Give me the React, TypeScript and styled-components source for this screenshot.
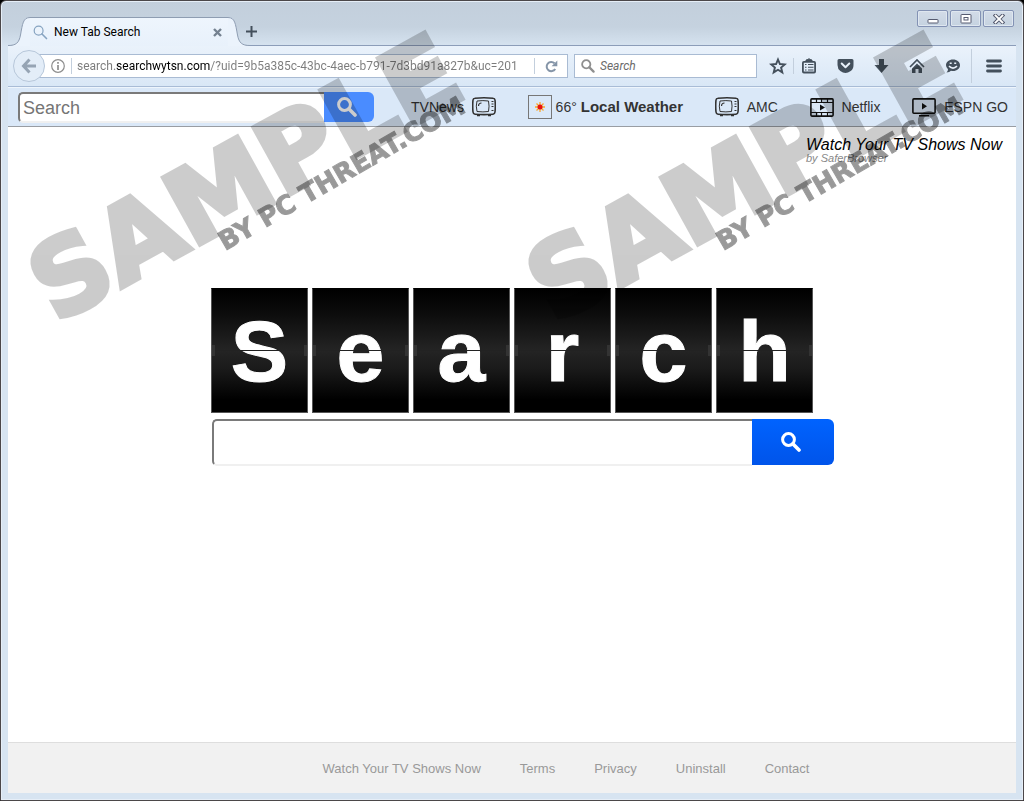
import React from 'react';
import styled, { createGlobalStyle } from 'styled-components';

const GlobalStyle = createGlobalStyle`
  * { box-sizing: border-box; }
  body { margin: 0; background: #000; font-family: "Liberation Sans", Arial, sans-serif; }
  button { font: inherit; cursor: pointer; }
  a { color: inherit; text-decoration: none; }
  svg { display: block; flex: none; }
`;

const uiFont = 'Roboto, "Noto Sans", sans-serif';

const Frame = styled.div`
  position: relative;
  overflow: hidden;
  display: flex;
  flex-direction: column;
  min-height: 100vh;
  padding: 0 7px 7px;
  border: 1px solid #4b4749;
  border-radius: 6px 6px 0 0;
  background: linear-gradient(#c3cfdc 0, #c5d2df 26px, #d7e4f1 46px);
  box-shadow: inset 0 0 0 1px #e6eef7;
`;

const TitleBar = styled.header`
  display: flex;
  justify-content: space-between;
  height: 44px;
`;

const TabStrip = styled.div`
  display: flex;
  align-items: flex-end;
  margin-bottom: -1px;
  z-index: 1;
`;

const TabBody = styled.div`
  display: flex;
  align-items: center;
  width: 198px;
  height: 29px;
  padding: 0 6px 0 3px;
  border-top: 1px solid #8e9db2;
  background: linear-gradient(#eef5fd, #e8f1fb);
  font: 12px/16px ${uiFont};
  color: #000;
`;

const TabTitle = styled.span`
  flex: 1;
  margin-left: 6px;
  white-space: nowrap;
`;

const PlainButton = styled.button`
  display: flex;
  align-items: center;
  justify-content: center;
  padding: 0;
  border: 0;
  background: none;
`;

const NewTabButton = styled(PlainButton)`
  width: 12px;
  height: 29px;
  margin-left: -5px;
`;

const WindowControls = styled.div`
  display: flex;
  gap: 2px;
  padding: 9px 2px 0 0;
`;

const WindowButton = styled(PlainButton)`
  width: 31px;
  height: 17px;
  border: 1px solid #8392b4;
  border-radius: 2px;
  background: linear-gradient(#d3dce8, #c5d2e0);
  box-shadow: inset 0 0 0 1px #dfe7f0;
`;

const NavBar = styled.div`
  display: flex;
  align-items: center;
  height: 42px;
  padding: 0 1px 0 5px;
  border-top: 1px solid #8c9db9;
  border-bottom: 1px solid #a9bcd6;
  background: linear-gradient(#eaf2fb, #d9e7f6);
`;

const BackButton = styled(PlainButton)`
  width: 32px;
  height: 32px;
  border: 1px solid #b7c7da;
  border-radius: 50%;
  background: #e3edf8;
  z-index: 1;
`;

const Field = styled.div`
  display: flex;
  align-items: center;
  height: 24px;
  border: 1px solid #a9bbd3;
  background: #fff;
`;

const UrlField = styled(Field)`
  flex: 1;
  min-width: 0;
  margin-left: -6px;
  padding-left: 11px;
`;

const SearchField = styled(Field)`
  width: 183px;
  margin: 0 11px 0 6px;
  padding-left: 6px;
`;

const Separator = styled.span<{ $tall?: boolean }>`
  width: 1px;
  height: ${(p) => (p.$tall ? 34 : 16)}px;
  background: #c3cfdd;
`;

const InfoSeparator = styled(Separator)`
  margin-left: 6px;
`;

const StarSeparator = styled(Separator)`
  margin: 0 -3px 0 5px;
`;

const UrlInput = styled.input`
  flex: 1;
  min-width: 0;
  margin-left: 5px;
  padding: 0;
  border: 0;
  outline: 0;
  font: 12px/18px ${uiFont};
  color: #000;
  background: linear-gradient(90deg, #7b7b7b 38px, #000 38px, #000 133px, #7b7b7b 133px);
  -webkit-background-clip: text;
  background-clip: text;
  -webkit-text-fill-color: transparent;
`;

const NavSearchInput = styled.input`
  flex: 1;
  min-width: 0;
  margin-left: 5px;
  padding: 0;
  border: 0;
  outline: 0;
  background: none;
  font: italic 12px/18px ${uiFont};
  &::placeholder { color: #6b6b6b; opacity: 1; }
`;

const ReloadButton = styled(PlainButton)`
  width: 32px;
  height: 22px;
`;

const NavIconButton = styled(PlainButton)<{ $w?: number }>`
  width: ${(p) => p.$w ?? 36}px;
  height: 32px;
`;

const Toolbar = styled.div`
  display: flex;
  align-items: center;
  height: 40px;
  padding: 0 8px 0 10px;
  border-top: 1px solid #eef5fc;
  border-bottom: 1px solid #999da3;
  background: #dae8f8;
`;

const SearchForm = styled.form`
  display: flex;
  flex: none;
`;

const InsetInput = styled.input<{ $large?: boolean }>`
  width: ${(p) => (p.$large ? 540 : 306)}px;
  height: ${(p) => (p.$large ? 47 : 31)}px;
  padding: 3px 3px 0;
  border: 2px solid;
  border-color: #7a7a7a #f0f0f0 #f0f0f0 #7a7a7a;
  border-right-width: 0;
  border-radius: 5px 0 0 5px;
  outline: 0;
  background: #fff;
  font: 18px/24px "Liberation Sans", Arial, sans-serif;
  &::placeholder { color: #757575; opacity: 1; }
`;

const BlueButton = styled(PlainButton)<{ $large?: boolean }>`
  width: ${(p) => (p.$large ? 82 : 50)}px;
  height: ${(p) => (p.$large ? 46 : 30)}px;
  padding-right: 4px;
  border-radius: 0 6px 6px 0;
  background: ${(p) => (p.$large ? 'linear-gradient(#0063ff, #0054ea)' : '#4a8cff')};
`;

const Shortcuts = styled.nav`
  display: flex;
  flex: 1;
  justify-content: space-between;
  margin-left: 37px;
  font-size: 14px;
  line-height: 24px;
  color: #333;
`;

const Shortcut = styled.a<{ $gap?: number }>`
  display: flex;
  align-items: center;
  gap: ${(p) => p.$gap ?? 8}px;
  white-space: nowrap;
`;

const WeatherLabel = styled.b`
  font-size: 15px;
`;

const WeatherIcon = styled.span`
  display: flex;
  align-items: center;
  justify-content: center;
  width: 24px;
  height: 24px;
  border: 1px solid #777;
`;

const Main = styled.main`
  display: flex;
  flex: 1;
  flex-direction: column;
  background: #fff;
`;

const Brand = styled.div`
  align-self: flex-end;
  width: 210px;
  height: 161px;
  padding-top: 9px;
  font-style: italic;
`;

const BrandName = styled.p`
  margin: 0;
  font-size: 16px;
  line-height: 17px;
  color: #000;
`;

const BrandBy = styled.p`
  margin: 0;
  font-size: 11px;
  line-height: 10px;
  color: #888;
`;

const Hero = styled.section`
  width: 602px;
  margin: 0 auto;
`;

const Tiles = styled.h1`
  display: grid;
  grid-template-columns: repeat(6, 97px);
  gap: 4px;
  margin: 0 0 6px;
`;

const Tile = styled.span`
  position: relative;
  height: 125px;
  border: 1px solid #555;
  border-top-color: #000;
  background: linear-gradient(#000, #0c0c0c 20%, #242424 50%, #1a1a1a 65%, #000 90%);
  text-align: center;
  font-size: 86px;
  font-weight: 700;
  line-height: 124px;
  color: #fff;
  -webkit-text-stroke: 1px #fff;

  &::before {
    content: '';
    position: absolute;
    left: 0;
    right: 0;
    top: 61px;
    height: 1px;
    background: #222;
  }
  &::after {
    content: '';
    position: absolute;
    left: 0;
    right: 0;
    top: 56px;
    height: 11px;
    border: solid #333;
    border-width: 0 3px;
  }
`;

const HeroForm = styled(SearchForm)`
  width: 622px;
  margin-left: 1px;
`;

const Footer = styled.footer`
  display: flex;
  justify-content: center;
  align-items: center;
  gap: 39px;
  height: 51px;
  padding: 2px 0 0 108px;
  border-top: 1px solid #dedede;
  background: #f1f1f1;
  font-size: 13px;
  line-height: 18px;
  color: #999;
`;

const Stamp = styled.div<{ $x: number }>`
  position: absolute;
  left: ${(p) => p.$x}px;
  top: 0;
  pointer-events: none;
  z-index: 2;
  font-family: "DejaVu Sans", sans-serif;
  font-weight: 700;
  white-space: nowrap;
  color: #000;
`;

const StampWord = styled.span`
  position: absolute;
  left: 55px;
  top: 235px;
  font-size: 104px;
  line-height: 104px;
  opacity: 0.2;
  -webkit-text-stroke: 5px #000;
  transform: rotate(-29deg);
  transform-origin: 0 85%;
`;

const StampBy = styled.span`
  position: absolute;
  left: 224px;
  top: 228px;
  font-size: 26px;
  line-height: 26px;
  opacity: 0.4;
  -webkit-text-stroke: 1px #000;
  transform: rotate(-30deg);
  transform-origin: 0 85%;
`;

const Magnifier = ({ size, color, thick }: { size: number; color: string; thick: number }) => (
  <svg width={size} height={size} viewBox="0 0 20 20" fill="none" stroke={color} strokeWidth={thick}>
    <circle cx="7.5" cy="7.5" r="5.9" />
    <path d="M12 12l6 6" strokeWidth={thick + 0.6} strokeLinecap="round" />
  </svg>
);

const TvIcon = () => (
  <svg width="24" height="20" viewBox="0 0 24 20" fill="none" stroke="#333">
    <path d="M3 1.2Q12 .4 21 1.2 22.8 1.3 23 3 23.6 9 23 15 22.8 17 21 17.2 12 18 3 17.2 1.2 17 1 15 .4 9 1 3 1.2 1.3 3 1.2Z" strokeWidth="1.6" />
    <path d="M5 4Q11 3.2 16.5 4 17.6 9 16.5 14.5 11 15.3 5 14.5 3.6 9 5 4Z" strokeWidth="1" />
    <path d="M6.5 9Q6.5 6 9.5 6M19.5 4.5h2M19.5 7h2M19.5 9.5h2M19.5 13.5h2M5 18.6h3M16 18.6h3" strokeWidth="1.1" />
  </svg>
);

const FilmIcon = () => (
  <svg width="24" height="19" viewBox="0 0 24 19" fill="none" stroke="#111">
    <rect x=".9" y=".9" width="22.2" height="17.2" rx="1" strokeWidth="1.6" />
    <path d="M1 4.500h22M1 14.500h22" strokeWidth="1" />
    <path d="M6.500 1v3.300M11.500 1v3.300M17.500 1v3.300M6.500 14.700V18M11.500 14.700V18M17.500 14.700V18" strokeWidth="1.2" />
    <path d="M10 6.500l5 3-5 3z" fill="#111" stroke="none" />
  </svg>
);

const ScreenIcon = () => (
  <svg width="24" height="19" viewBox="0 0 24 19" fill="none" stroke="#111">
    <rect x=".9" y=".9" width="22.2" height="14.4" rx="1" strokeWidth="1.6" />
    <path d="M10 5l5 3.200-5 3.200z" fill="#111" stroke="none" />
    <path d="M7 17.700h10" strokeWidth="1.5" />
  </svg>
);

const StarIcon = () => (
  <svg width="18" height="18" viewBox="0 0 18 18" fill="none" stroke="#44505c" strokeWidth="1.9" strokeLinejoin="miter">
    <path d="M9 2.500l1.900 4.500 4.900.4-3.700 3.200 1.200 4.800L9 12.800l-4.300 2.600 1.200-4.800-3.700-3.200L7.100 7z" />
  </svg>
);

const ClipboardIcon = () => (
  <svg width="16" height="16" viewBox="0 0 16 16" fill="none" stroke="#44505c">
    <rect x="1.9" y="3.9" width="12.2" height="10.6" rx="1" strokeWidth="1.8" />
    <path d="M5 3V2l2-.4L8 .5l1 1.100L11 2v1z" fill="#44505c" />
    <path d="M4 6.500h1.500M7 6.500h5.500M4 9.200h1.500M7 9.200h5.500M4 12h1.500M7 12h5.500" strokeWidth="1.1" />
  </svg>
);

const PocketIcon = () => (
  <svg width="17" height="16" viewBox="0 0 17 16" fill="none">
    <path d="M2 1h13q1.500 0 1.500 1.500V7q0 4-2.800 6T8.500 15Q6 15 3.300 13T.5 7V2.500Q.5 1 2 1z" fill="#44505c" />
    <path d="M4.700 5.500l3.800 3.700 3.800-3.700" stroke="#e9f1fa" strokeWidth="2" strokeLinecap="round" strokeLinejoin="round" />
  </svg>
);

const DownloadIcon = () => (
  <svg width="15" height="16" viewBox="0 0 15 16">
    <path d="M5 1h5v6h4.500L7.500 15 .5 7H5z" fill="#44505c" />
  </svg>
);

const HomeIcon = () => (
  <svg width="16" height="16" viewBox="0 0 16 16" fill="none">
    <path d="M1 9l7-7 7 7" stroke="#44505c" strokeWidth="1.600" />
    <path d="M3 10.500l5-5 5 5V15H9.500v-4h-3v4H3z" fill="#44505c" />
  </svg>
);

const ChatIcon = () => (
  <svg width="16" height="16" viewBox="0 0 16 16" fill="none">
    <path d="M8 1.500c4 0 7 2.500 7 5.700s-3 5.800-7 5.800q-1 0-2-.3Q4.500 14.500 1.500 14.500 3 13 3 11.300 1 9.600 1 7.200C1 4 4 1.500 8 1.500z" fill="#44505c" />
    <path d="M4 8.200q4 3.800 8 0M4.700 5.300h2M9.200 5.300h2" stroke="#e9f1fa" strokeWidth="1.600" />
  </svg>
);

const MenuIcon = () => (
  <svg width="16" height="14" viewBox="0 0 16 14" stroke="#44505c" strokeWidth="2.800" strokeLinecap="round">
    <path d="M1.500 2h13M1.500 7h13M1.500 12h13" />
  </svg>
);

const SunIcon = () => (
  <svg width="12" height="12" viewBox="0 0 12 12">
    <path d="M6 1v10M1 6h10M2.500 2.500l7 7M9.500 2.500l-7 7" stroke="#f9a72b" strokeWidth="1.300" />
    <circle cx="6" cy="6" r="2.500" fill="#e81010" />
  </svg>
);

const leftEdge = {
  fill: 'M0 29.500C8 29.500 11 27 12.500 19 14.500 8 15 1.500 22 1V30H0z',
  line: 'M0 29.500C8 29.500 11 27 12.500 19 14.500 8 15 1.500 22 1.500',
};
const rightEdge = {
  fill: 'M22 29.500C14 29.500 11 27 9.500 19 7.500 8 7 1.500 0 1V30H22z',
  line: 'M22 29.500C14 29.500 11 27 9.500 19 7.500 8 7 1.500 0 1.500',
};

const TabEdge = ({ shape }: { shape: { fill: string; line: string } }) => (
  <svg width="22" height="30" viewBox="0 0 22 30">
    <path d={shape.fill} fill="#ebf3fc" />
    <path d={shape.line} fill="none" stroke="#8e9db2" />
  </svg>
);

const footerLinks = ['Watch Your TV Shows Now', 'Terms', 'Privacy', 'Uninstall', 'Contact'];

const stop = (e: React.FormEvent) => e.preventDefault();

export default function App() {
  return (
    <>
      <GlobalStyle />
      <Frame>
        <TitleBar>
          <TabStrip>
            <TabEdge shape={leftEdge} />
            <TabBody>
              <Magnifier size={15} color="#86a3c0" thick={1.6} />
              <TabTitle>New Tab Search</TabTitle>
              <PlainButton aria-label="Close tab">
                <svg width="9" height="9" viewBox="0 0 9 9" stroke="#748190" strokeWidth="2.4">
                  <path d="M1 1l7 7M8 1L1 8" />
                </svg>
              </PlainButton>
            </TabBody>
            <TabEdge shape={rightEdge} />
            <NewTabButton aria-label="New tab">
              <svg width="11" height="11" viewBox="0 0 11 11" stroke="#44505c" strokeWidth="2">
                <path d="M5.500 0v11M0 5.500h11" />
              </svg>
            </NewTabButton>
          </TabStrip>
          <WindowControls>
            <WindowButton aria-label="Minimize">
              <svg width="12" height="10" viewBox="0 0 12 10">
                <rect x="1" y="5.500" width="10" height="3.500" rx=".5" fill="#fff" stroke="#565b70" />
              </svg>
            </WindowButton>
            <WindowButton aria-label="Maximize">
              <svg width="12" height="10" viewBox="0 0 12 10" fill="#fff" stroke="#565b70">
                <rect x="1" y=".5" width="10" height="8.500" rx=".5" />
                <rect x="4" y="3.500" width="4" height="2.500" />
              </svg>
            </WindowButton>
            <WindowButton aria-label="Close">
              <svg width="12" height="10" viewBox="0 0 12 10" fill="none" strokeLinecap="square">
                <path d="M2.500 1.500l7 7M9.500 1.500l-7 7" stroke="#565b70" strokeWidth="3.800" />
                <path d="M2.500 1.500l7 7M9.500 1.500l-7 7" stroke="#fff" strokeWidth="1.800" />
              </svg>
            </WindowButton>
          </WindowControls>
        </TitleBar>

        <NavBar>
          <BackButton aria-label="Back">
            <svg width="16" height="16" viewBox="0 0 16 16" fill="none" stroke="#96a4b4" strokeWidth="3">
              <path d="M8.500 1.500L2.500 8l6 6.500M3 8h12" />
            </svg>
          </BackButton>
          <UrlField>
            <svg width="14" height="14" viewBox="0 0 14 14" fill="none" stroke="#8d8d8d">
              <circle cx="7" cy="7" r="6.300" strokeWidth="1.200" />
              <path d="M7 6v5M7 3v1.700" strokeWidth="1.700" />
            </svg>
            <InfoSeparator />
            <UrlInput
              aria-label="Address"
              defaultValue="search.searchwytsn.com/?uid=9b5a385c-43bc-4aec-b791-7d3bd91a827b&uc=201"
            />
            <Separator />
            <ReloadButton aria-label="Reload">
              <svg width="13" height="13" viewBox="0 0 13 13" fill="none">
                <path d="M10.200 9A4.600 4.600 0 1 1 9.500 3.300" stroke="#8595a8" strokeWidth="2" />
                <path d="M12.300.5v5.700H6.600z" fill="#8595a8" />
              </svg>
            </ReloadButton>
          </UrlField>
          <SearchField>
            <Magnifier size={14} color="#8f8f8f" thick={2.6} />
            <NavSearchInput aria-label="Web search" placeholder="Search" />
          </SearchField>
          <NavIconButton $w={20} aria-label="Bookmark"><StarIcon /></NavIconButton>
          <StarSeparator />
          <NavIconButton aria-label="Bookmarks list"><ClipboardIcon /></NavIconButton>
          <NavIconButton aria-label="Pocket"><PocketIcon /></NavIconButton>
          <NavIconButton aria-label="Downloads"><DownloadIcon /></NavIconButton>
          <NavIconButton aria-label="Home"><HomeIcon /></NavIconButton>
          <NavIconButton aria-label="Chat"><ChatIcon /></NavIconButton>
          <Separator $tall />
          <NavIconButton $w={43} aria-label="Menu"><MenuIcon /></NavIconButton>
        </NavBar>

        <Toolbar>
          <SearchForm onSubmit={stop}>
            <InsetInput aria-label="Toolbar search" placeholder="Search" />
            <BlueButton aria-label="Search"><Magnifier size={20} color="#fff" thick={3} /></BlueButton>
          </SearchForm>
          <Shortcuts>
            <Shortcut href="#tvnews">TVNews<TvIcon /></Shortcut>
            <Shortcut href="#weather" $gap={4}>
              <WeatherIcon><SunIcon /></WeatherIcon>
              <span>66°</span>
              <WeatherLabel>Local Weather</WeatherLabel>
            </Shortcut>
            <Shortcut href="#amc"><TvIcon />AMC</Shortcut>
            <Shortcut href="#netflix"><FilmIcon />Netflix</Shortcut>
            <Shortcut href="#espn"><ScreenIcon />ESPN GO</Shortcut>
          </Shortcuts>
        </Toolbar>

        <Main>
          <Brand>
            <BrandName>Watch Your TV Shows Now</BrandName>
            <BrandBy>by SaferBrowser</BrandBy>
          </Brand>
          <Hero>
            <Tiles aria-label="Search">
              {'Search'.split('').map((letter) => (
                <Tile key={letter}>{letter}</Tile>
              ))}
            </Tiles>
            <HeroForm onSubmit={stop}>
              <InsetInput $large aria-label="Search the web" />
              <BlueButton $large aria-label="Search"><Magnifier size={20} color="#fff" thick={3} /></BlueButton>
            </HeroForm>
          </Hero>
        </Main>

        <Footer>
          {footerLinks.map((label) => (
            <a key={label} href="#footer">{label}</a>
          ))}
        </Footer>

        {[0, 498].map((x) => (
          <Stamp key={x} $x={x}>
            <StampWord>SAMPLE</StampWord>
            <StampBy>BY PC THREAT.COM</StampBy>
          </Stamp>
        ))}
      </Frame>
    </>
  );
}
